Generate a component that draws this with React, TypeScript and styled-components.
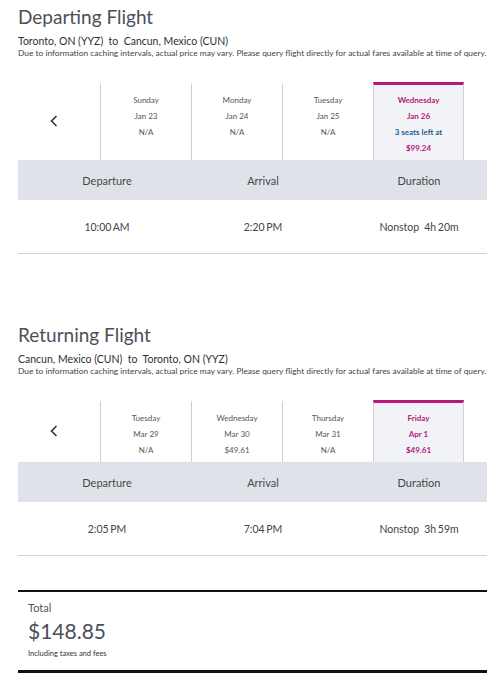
import React from "react";
import styled, { createGlobalStyle } from "styled-components";

const GlobalStyle = createGlobalStyle`
  html, body {
    margin: 0;
    padding: 0;
    background: #ffffff;
    overflow-x: hidden;
  }
  body {
    font-family: Lato, "Open Sans", sans-serif;
    color: #444;
  }
`;

const Page = styled.div`
  padding-left: 18px;
  width: 482px;
`;

const Section = styled.section<{ gapTop?: number }>`
  padding-top: 5px;
  margin-top: ${(p) => p.gapTop ?? 0}px;
`;

const Title = styled.h1`
  margin: 0;
  font-size: 19px;
  line-height: 23px;
  font-weight: 400;
  color: #4b5058;
`;

const Route = styled.div`
  margin-top: 7px;
  font-size: 10.5px;
  line-height: 13px;
  color: #2f2f2f;
  white-space: nowrap;
`;

const Notice = styled.div`
  font-size: 8.4px;
  line-height: 11px;
  color: #444;
  white-space: nowrap;
`;

const Strip = styled.div`
  margin-top: 23px;
  display: flex;
  align-items: stretch;
`;

const PrevButton = styled.div`
  width: 71px;
  margin-right: 11px;
  display: flex;
  align-items: center;
  justify-content: center;
`;

const DayCell = styled.div<{ selected?: boolean }>`
  width: 91px;
  box-sizing: border-box;
  text-align: center;
  font-size: 8px;
  line-height: 16px;
  padding: 7px 0 4px;
  color: ${(p) => (p.selected ? "#b5177d" : "#555")};
  font-weight: ${(p) => (p.selected ? 700 : 400)};
  border-left: 1px solid #cfcfcf;
  background: ${(p) => (p.selected ? "#f2f3f6" : "transparent")};
  border-top: ${(p) => (p.selected ? "3px solid #b5177d" : "3px solid transparent")};
  border-right: ${(p) => (p.selected ? "1px solid #cfcfcf" : "none")};
`;

const Seats = styled.div`
  color: #1c5e8e;
`;

const Grid = styled.div`
  display: grid;
  grid-template-columns: repeat(3, 156px);
  padding-left: 11px;
  align-items: center;
  justify-items: center;
`;

const HeaderRow = styled(Grid)`
  height: 40px;
  background: #dfe3e9;
  font-size: 11px;
  color: #474747;
`;

const DataRow = styled(Grid)`
  height: 53px;
  border-bottom: 1px solid #d2d2d2;
  font-size: 10.5px;
  color: #444;
  word-spacing: -1px;
`;

const Stops = styled.span`
  margin-right: 5px;
`;

const TotalBox = styled.div`
  margin-top: 34px;
  border-top: 2px solid #111;
  border-bottom: 3px solid #111;
  padding: 9px 0 11px 10px;
`;

const TotalLabel = styled.div`
  font-size: 11px;
  line-height: 14px;
  color: #555;
`;

const TotalPrice = styled.div`
  margin-top: 4px;
  font-size: 21px;
  line-height: 24px;
  color: #4b5058;
`;

const TotalNote = styled.div`
  margin-top: 6px;
  font-size: 7.5px;
  line-height: 10px;
  color: #333333;
`;

type Day = {
  weekday: string;
  date: string;
  price: string;
  seats?: string;
  selected?: boolean;
};

type FlightProps = {
  title: string;
  from: string;
  to: string;
  days: Day[];
  departure: string;
  arrival: string;
  duration: string;
  gapTop?: number;
};

const Chevron = () => (
  <svg width="8" height="12" viewBox="0 0 8 12">
    <polyline
      points="6.5,1 1.5,6 6.5,11"
      fill="none"
      stroke="#333"
      strokeWidth="1.6"
    />
  </svg>
);

const Flight: React.FC<FlightProps> = ({
  title,
  from,
  to,
  days,
  departure,
  arrival,
  duration,
  gapTop,
}) => (
  <Section gapTop={gapTop}>
    <Title>{title}</Title>
    <Route>
      {from}&nbsp; to &nbsp;{to}
    </Route>
    <Notice>
      Due to information caching intervals, actual price may vary. Please
      query flight directly for actual fares available at time of query.
    </Notice>
    <Strip>
      <PrevButton>
        <Chevron />
      </PrevButton>
      {days.map((d) => (
        <DayCell key={d.date} selected={d.selected}>
          <div>{d.weekday}</div>
          <div>{d.date}</div>
          {d.seats && <Seats>{d.seats}</Seats>}
          <div>{d.price}</div>
        </DayCell>
      ))}
    </Strip>
    <HeaderRow>
      <div>Departure</div>
      <div>Arrival</div>
      <div>Duration</div>
    </HeaderRow>
    <DataRow>
      <div>{departure}</div>
      <div>{arrival}</div>
      <div>
        <Stops>Nonstop</Stops>
        {duration}
      </div>
    </DataRow>
  </Section>
);

export default function App() {
  return (
    <Page>
      <GlobalStyle />
      <Flight
        title="Departing Flight"
        from="Toronto, ON (YYZ)"
        to="Cancun, Mexico (CUN)"
        days={[
          { weekday: "Sunday", date: "Jan 23", price: "N/A" },
          { weekday: "Monday", date: "Jan 24", price: "N/A" },
          { weekday: "Tuesday", date: "Jan 25", price: "N/A" },
          {
            weekday: "Wednesday",
            date: "Jan 26",
            seats: "3 seats left at",
            price: "$99.24",
            selected: true,
          },
        ]}
        departure="10:00 AM"
        arrival="2:20 PM"
        duration="4h 20m"
      />
      <Flight
        gapTop={64}
        title="Returning Flight"
        from="Cancun, Mexico (CUN)"
        to="Toronto, ON (YYZ)"
        days={[
          { weekday: "Tuesday", date: "Mar 29", price: "N/A" },
          { weekday: "Wednesday", date: "Mar 30", price: "$49.61" },
          { weekday: "Thursday", date: "Mar 31", price: "N/A" },
          { weekday: "Friday", date: "Apr 1", price: "$49.61", selected: true },
        ]}
        departure="2:05 PM"
        arrival="7:04 PM"
        duration="3h 59m"
      />
      <TotalBox>
        <TotalLabel>Total</TotalLabel>
        <TotalPrice>$148.85</TotalPrice>
        <TotalNote>Including taxes and fees</TotalNote>
      </TotalBox>
    </Page>
  );
}
